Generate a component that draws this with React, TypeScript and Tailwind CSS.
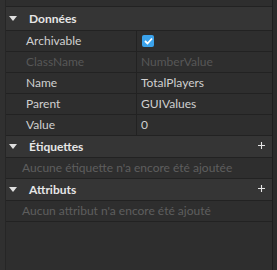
type Prop = { name: string; value: string; muted?: boolean; check?: boolean };

const props: Prop[] = [
  { name: "Archivable", value: "", check: true },
  { name: "ClassName", value: "NumberValue", muted: true },
  { name: "Name", value: "TotalPlayers" },
  { name: "Parent", value: "GUIValues" },
  { name: "Value", value: "0" },
];

function PlusIcon() {
  return (
    <svg width="7" height="7" viewBox="0 0 7 7" className="absolute right-[7px] top-[6px]">
      <path d="M3.5 0 V7 M0 3.5 H7" stroke="#e6e6e6" strokeWidth="1.1" />
    </svg>
  );
}

function Header({ title, plus, tall }: { title: string; plus?: boolean; tall?: boolean }) {
  return (
    <div
      className={
        (tall ? "h-[24px] " : "h-[22px] ") +
        "flex items-center bg-[#353535] border-b border-[#222222] relative"
      }
    >
      <svg width="8" height="6" viewBox="0 0 8 6" className="ml-[3px] mr-[12px]">
        <path d="M0 0 L8 0 L4 5 Z" fill="#e0e0e0" />
      </svg>
      <span className="font-bold text-[12px] text-[#e6e6e6]">{title}</span>
      {plus && <PlusIcon />}
    </div>
  );
}

function Row({ p }: { p: Prop }) {
  const tone = p.muted ? "text-[#575757]" : "text-[#d0d0d0]";
  return (
    <div className="h-[21px] flex border-b border-[#222222]">
      <div className={"w-[131px] pl-[20px] flex items-center border-r border-[#222222] " + tone}>{p.name}</div>
      <div className={"flex-1 pl-[4px] flex items-center " + tone}>
        {p.check ? (
          <span className="w-[12px] h-[12px] rounded-[2px] bg-[#3ba3ec] flex items-center justify-center ml-[1px]">
            <svg width="9" height="8" viewBox="0 0 9 8">
              <path d="M1 4 L3.5 6.5 L8 1.5" stroke="white" strokeWidth="1.8" fill="none" />
            </svg>
          </span>
        ) : (
          p.value
        )}
      </div>
    </div>
  );
}

function Note({ text }: { text: string }) {
  return (
    <div className="h-[21px] flex items-center pl-[16px] text-[#5e5e5e] border-b border-[#222222]">{text}</div>
  );
}

export default function App() {
  return (
    <div
      className="w-[277px] h-[270px] bg-[#2e2e2e] flex text-[12px] overflow-hidden"
      style={{ fontFamily: "Lato, 'Open Sans', sans-serif" }}
    >
      <div className="w-[6px] border-r border-[#262626] bg-[#303030]" />
      <div className="flex-1 flex flex-col">
        <div className="h-[7px] border-b border-[#222222]" />
        <Header title="Données" tall />
        {props.map((p) => (
          <Row key={p.name} p={p} />
        ))}
        <Header title="Étiquettes" plus />
        <Note text="Aucune étiquette n'a encore été ajoutée" />
        <Header title="Attributs" plus />
        <Note text="Aucun attribut n'a encore été ajouté" />
      </div>
      <div className="w-[5px] border-l border-[#1e1e1e] bg-[#2b2b2b]" />
    </div>
  );
}
